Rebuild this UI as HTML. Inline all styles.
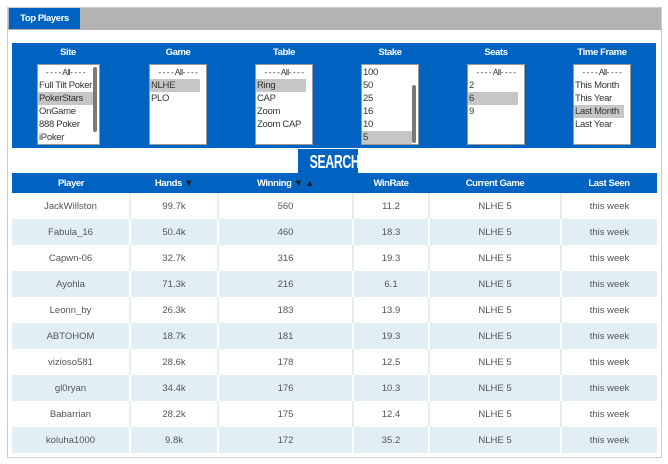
<!DOCTYPE html>
<html><head><meta charset="utf-8"><style>
*{margin:0;padding:0;box-sizing:border-box}
body{width:668px;height:464px;background:#fff;font-family:"Liberation Sans",sans-serif;position:relative;overflow:hidden}
.frame{position:absolute;left:7px;top:7px;width:655px;height:451px;border:1px solid #ccc;background:#fff}
.tabbar{position:absolute;left:8px;top:8px;width:653px;height:22px;background:#b3b3b3}
.tab{position:absolute;left:9px;top:8px;width:71px;height:21px;background:#0063c1;color:#fff;font-size:9.5px;font-weight:bold;line-height:21px;text-align:center;letter-spacing:-0.4px}
.panel{position:absolute;left:12px;top:43px;width:644px;height:105px;background:#0063c1}
.lbl{position:absolute;top:47px;color:#fff;font-size:9.5px;font-weight:bold;text-align:center;width:80px;letter-spacing:-0.4px}
.box{position:absolute;top:64px;height:81px;background:#fff;border:1px solid #999;font-size:9.5px;color:#333;padding-top:1px;overflow:hidden;letter-spacing:-0.3px}
.box div{height:13px;line-height:13px;padding-left:1px;white-space:nowrap}
.box .s{background:#c6c6c6}
.box .a{text-align:center;padding:0;font-size:8.5px;letter-spacing:-0.5px}
.sb{position:absolute;right:2px;width:4px;background:#7a7a7a;border-radius:2px}
.search{position:absolute;left:298px;top:149px;width:60px;height:25px;background:#0063c1;color:#fff;font-weight:bold;font-size:18px;line-height:26px;text-align:center;white-space:nowrap}
.search span{display:inline-block;transform:scaleX(0.68);letter-spacing:-0.5px}
table{position:absolute;left:12px;top:173px;width:645px;border-collapse:collapse;font-size:9.5px}
th{background:#0063c1;color:#fff;height:20px;font-weight:bold;letter-spacing:-0.4px}
td{height:26px;text-align:center;color:#555;border-left:2px solid #e1eef5}
td:first-child{border-left:none}
tr.b td{background:#e1eef5;border-left:2px solid #fff}
tr.b td:first-child{border-left:none}
</style></head><body>
<div class="frame"></div>
<div class="tabbar"></div>
<div class="tab">Top Players</div>
<div class="panel"></div>
<div class="lbl" style="left:28px">Site</div>
<div class="lbl" style="left:138px">Game</div>
<div class="lbl" style="left:244px">Table</div>
<div class="lbl" style="left:350px">Stake</div>
<div class="lbl" style="left:456px">Seats</div>
<div class="lbl" style="left:562px">Time Frame</div>
<div class="box" style="left:37px;width:63px"><div class="a" style="padding-right:6px">- - - - All- - - -</div><div>Full Tilt Poker</div><div class="s" style="width:55px">PokerStars</div><div>OnGame</div><div>888 Poker</div><div>iPoker</div><div class="sb" style="top:2px;height:65px"></div></div>
<div class="box" style="left:149px;width:58px"><div class="a">- - - - All- - - -</div><div class="s" style="width:50px">NLHE</div><div>PLO</div></div>
<div class="box" style="left:255px;width:58px"><div class="a">- - - - All- - - -</div><div class="s" style="width:50px">Ring</div><div>CAP</div><div>Zoom</div><div>Zoom CAP</div></div>
<div class="box" style="left:361px;width:58px"><div>100</div><div>50</div><div>25</div><div>16</div><div>10</div><div class="s" style="width:50px">5</div><div class="sb" style="top:20px;height:58px"></div></div>
<div class="box" style="left:467px;width:58px"><div class="a">- - - - All- - - -</div><div>2</div><div class="s" style="width:50px">6</div><div>9</div></div>
<div class="box" style="left:573px;width:58px"><div class="a">- - - - All- - - -</div><div>This Month</div><div>This Year</div><div class="s" style="width:50px">Last Month</div><div>Last Year</div></div>
<div class="search"><span>SEARCH</span></div>
<table>
<colgroup><col style="width:118px"><col style="width:88px"><col style="width:135px"><col style="width:76px"><col style="width:132px"><col style="width:96px"></colgroup>
<tr><th>Player</th><th>Hands <span style="color:#222">&#9660;</span></th><th>Winning <span style="color:#222">&#9660; &#9650;</span></th><th>WinRate</th><th>Current Game</th><th>Last Seen</th></tr>
<tr><td>JackWillston</td><td>99.7k</td><td>560</td><td>11.2</td><td>NLHE 5</td><td>this week</td></tr>
<tr class="b"><td>Fabula_16</td><td>50.4k</td><td>460</td><td>18.3</td><td>NLHE 5</td><td>this week</td></tr>
<tr><td>Capwn-06</td><td>32.7k</td><td>316</td><td>19.3</td><td>NLHE 5</td><td>this week</td></tr>
<tr class="b"><td>Ayohla</td><td>71.3k</td><td>216</td><td>6.1</td><td>NLHE 5</td><td>this week</td></tr>
<tr><td>Leonn_by</td><td>26.3k</td><td>183</td><td>13.9</td><td>NLHE 5</td><td>this week</td></tr>
<tr class="b"><td>ABTOHOM</td><td>18.7k</td><td>181</td><td>19.3</td><td>NLHE 5</td><td>this week</td></tr>
<tr><td>vizioso581</td><td>28.6k</td><td>178</td><td>12.5</td><td>NLHE 5</td><td>this week</td></tr>
<tr class="b"><td>gl0ryan</td><td>34.4k</td><td>176</td><td>10.3</td><td>NLHE 5</td><td>this week</td></tr>
<tr><td>Babarrian</td><td>28.2k</td><td>175</td><td>12.4</td><td>NLHE 5</td><td>this week</td></tr>
<tr class="b"><td>koluha1000</td><td>9.8k</td><td>172</td><td>35.2</td><td>NLHE 5</td><td>this week</td></tr>
</table>
</body></html>
